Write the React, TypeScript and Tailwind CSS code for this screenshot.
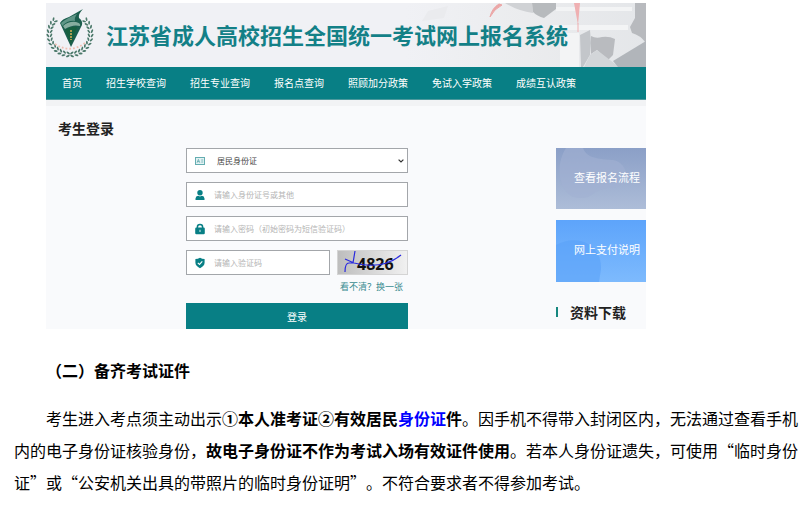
import React from 'react';

const NAV_ITEMS = ['首页', '招生学校查询', '招生专业查询', '报名点查询', '照顾加分政策', '免试入学政策', '成绩互认政策'];

const LEAF_ANGLES = Array.from({ length: 12 }, (_, i) => 48 + i * 11.5);

function Emblem() {
  return (
    <svg viewBox="0 0 48 48" className="relative -mt-1 size-12 shrink-0 overflow-visible" aria-hidden="true">
      {[1, -1].map((side) => (
        <g key={side} transform={side < 0 ? 'translate(48 0) scale(-1 1)' : undefined}>
          {LEAF_ANGLES.map((angle) => (
            <g key={angle} transform={`rotate(${angle} 24 25)`} fill="#4a7869">
              <ellipse cx="24" cy="2.8" rx="2" ry="0.9" transform="rotate(32 24 2.8)" />
              <ellipse cx="24" cy="6" rx="2" ry="0.9" transform="rotate(-32 24 6)" />
            </g>
          ))}
        </g>
      ))}
      <path d="M9 35 Q24 45 39 34" fill="none" stroke="#f0bdb0" strokeWidth="1.8" strokeDasharray="1.8 2" />
      <path d="M14 14 Q16 10 23 8 L37 0 Q32 5 33 9 Q37 12 36 16 L25 38 Z" fill="#1c5e4e" />
      <path d="M15 14 Q21 9 31 5 Q28 9 29 12 Q22 11 16 17 Z" fill="#5f9687" />
      <path d="M17 17 Q23 12 30 13 Q35 14 34 17 Q27 15 19 20 Z" fill="#86ad9f" />
      <path d="M19 21 Q25 17 31 18 L25 35 Z" fill="#17603f" />
      <path d="M25 21 V31" stroke="#a99b52" strokeWidth="2" strokeDasharray="2 1" />
    </svg>
  );
}

function GraduationBackdrop() {
  return (
    <svg viewBox="0 0 240 64" preserveAspectRatio="xMaxYMid slice" className="absolute inset-y-0 right-0 h-full w-60" aria-hidden="true">
      <defs>
        <linearGradient id="fade" x1="0" x2="1" y1="0" y2="0">
          <stop offset="0" stopColor="#f0f1f5" />
          <stop offset="0.5" stopColor="#ebecee" />
          <stop offset="1" stopColor="#e4e6e9" />
        </linearGradient>
      </defs>
      <rect width="240" height="64" fill="url(#fade)" />
      <path d="M22 8 L42 3 L38 15 L16 18 Z" fill="#eaebee" />
      <path d="M150 4 H226 V8 H150 Z M144 22 H222 V27 H144 Z M154 30 H173 V64 H154 Z" fill="#f3f4f5" />
      <path d="M99 0 H126 L127 10 Q112 8 99 0 Z" fill="#d0d2d5" />
      <path d="M126 0 H150 V6 L138 15 Q131 13 127 9 Z" fill="#b7babd" />
      <path d="M229 0 H240 V40 Q234 32 226 30 L224 24 L229 15 Z" fill="#b8babe" />
      <path d="M174 32 L184 27 L185 40 L184 52 L177 64 H175 Z" fill="#c3c6ca" />
      <path d="M185 33 Q190 36 196 34 Q203 33 209 36 L207 52 L202 57 L191 47 L185 51 Z" fill="#b9bbbf" />
      <path d="M191 47 L213 64 H178 L184 52 Z" fill="#d3d6d9" />
      <path d="M207 58 L240 38 V64 H212 Z" fill="#b1b5ba" />
      <path d="M96 2 Q88 6 84 14 Q86 5 93 1 Z" fill="#eba6a6" stroke="#eba6a6" />
      <path d="M168 0 H174 L172 22 Z" fill="#efb0b2" />
      <path d="M172 20 V29" stroke="#efb0b2" />
    </svg>
  );
}

function CardIcon() {
  return (
    <svg viewBox="0 0 10 8" className="h-2 w-2.5 shrink-0" aria-hidden="true">
      <rect x="0.5" y="0.5" width="9" height="7" fill="#e3f2f3" stroke="#64adb1" />
      <path d="M2 5.8 L3.4 2.4 L4.8 5.8 M2.6 4.6 H4.2 M6.2 3 H8.2 M6.2 5 H8.2" fill="none" stroke="#4fa0a5" strokeWidth="0.7" />
    </svg>
  );
}

function UserIcon() {
  return (
    <svg viewBox="0 0 10 10" className="size-2.5 shrink-0" fill="#087f85" aria-hidden="true">
      <circle cx="5" cy="2.8" r="2.7" />
      <path d="M0.5 10 V8.4 Q0.7 6.2 3.2 5.8 L5 6.6 L6.8 5.8 Q9.3 6.2 9.5 8.4 V10 Z" />
    </svg>
  );
}

function LockIcon() {
  return (
    <svg viewBox="0 0 10 11" className="h-3 w-2.5 shrink-0" aria-hidden="true">
      <path d="M2.4 5 V3.4 Q2.4 1 5 1 Q7.6 1 7.6 3.4 V5" fill="none" stroke="#087f85" strokeWidth="1.5" />
      <rect x="0.2" y="4" width="9.6" height="6.8" rx="1.2" fill="#087f85" />
      <path d="M5 6.3 V8.4" stroke="#b9dcde" strokeWidth="1.2" />
    </svg>
  );
}

function ShieldIcon() {
  return (
    <svg viewBox="0 0 10 11" className="h-3 w-2.5 shrink-0" aria-hidden="true">
      <path d="M5 0.3 Q7 1.6 9.6 1.6 V5.3 Q9.4 8.8 5 10.7 Q0.6 8.8 0.4 5.3 V1.6 Q3 1.6 5 0.3 Z" fill="#087f85" />
      <path d="M2.8 5.3 L4.5 6.9 L7.3 3.9" fill="none" stroke="#fff" strokeWidth="1.1" />
    </svg>
  );
}

function Captcha() {
  return (
    <svg viewBox="0 0 71 25" className="h-[25px] w-[71px]" role="img" aria-label="验证码">
      <defs>
        <linearGradient id="captcha" x1="0" x2="1" y1="0" y2="0">
          <stop offset="0" stopColor="#bdbdbd" />
          <stop offset="1" stopColor="#f1f1f1" />
        </linearGradient>
      </defs>
      <rect x="0.5" y="0.5" width="70" height="24" fill="url(#captcha)" stroke="#d4d4d4" />
      <text x="20" y="20" fontSize="16" fontWeight="700" fontFamily="'Open Sans', sans-serif" fill="#111">
        4826
      </text>
      <path d="M8 9 L17 13 Q46 20 64 5 M18 1 L16 13 H12 Q8 13 8 22" fill="none" stroke="#2929df" strokeWidth="1.2" />
    </svg>
  );
}

interface FieldProps {
  icon: React.ReactNode;
  label: string;
  type?: string;
}

function Field({ icon, label, type = 'text' }: FieldProps) {
  return (
    <label className="flex h-[25px] min-w-0 flex-1 items-center gap-[9px] border border-[#a3a6aa] bg-white pl-2">
      {icon}
      <input
        type={type}
        placeholder={label}
        aria-label={label}
        className="w-full min-w-0 bg-transparent text-[8px] text-[#555] outline-none placeholder:text-[#b4b4b4]"
      />
    </label>
  );
}

function LoginForm() {
  return (
    <form className="flex w-[222px] flex-col gap-[9px]" onSubmit={(e) => e.preventDefault()}>
      <label className="relative flex h-[25px] items-center gap-3 border border-[#a3a6aa] bg-white pl-2">
        <CardIcon />
        <select aria-label="证件类型" className="w-full appearance-none bg-transparent text-[8px] text-[#444] outline-none">
          <option>居民身份证</option>
        </select>
        <svg viewBox="0 0 6 4" className="pointer-events-none absolute right-[3px] h-1 w-1.5" aria-hidden="true">
          <path d="M0.6 0.6 L3 3 L5.4 0.6" fill="none" stroke="#333" strokeWidth="1.2" />
        </svg>
      </label>
      <div className="flex">
        <Field icon={<UserIcon />} label="请输入身份证号或其他" />
      </div>
      <div className="flex">
        <Field icon={<LockIcon />} label="请输入密码（初始密码为短信验证码）" type="password" />
      </div>
      <div className="flex gap-[7px]">
        <Field icon={<ShieldIcon />} label="请输入验证码" />
        <Captcha />
      </div>
      <a href="#captcha" className="-mt-[5px] self-end pr-[5px] text-[9px] leading-4 text-[#3a8c91]">
        看不清？换一张
      </a>
      <button type="submit" className="-mt-px h-[26px] bg-[#087f85] text-[10px] text-white">
        登录
      </button>
    </form>
  );
}

function Sidebar() {
  return (
    <aside className="w-[90px] overflow-hidden whitespace-nowrap">
      <a href="#process" className="relative flex h-[61px] items-center overflow-hidden bg-linear-to-b from-[#8b9fc7] to-[#adbdd8] pb-[3px] pl-[18px] text-[11px] text-white">
        <svg viewBox="0 0 90 61" className="absolute inset-0 size-full" aria-hidden="true">
          <path d="M10 0 C-2 18 3 49 23 50 C39 51 38 39 56 40 C77 38 72 14 57 12 C37 11 30 8 27 0 Z" fill="#a1b1d2" opacity="0.6" />
        </svg>
        <span className="relative">查看报名流程</span>
      </a>
      <a href="#payment" className="relative mt-[11px] flex h-[62px] items-center overflow-hidden bg-linear-to-b from-[#5da4fb] to-[#7dbafd] pb-[3px] pl-[18px] text-[11px] text-white">
        <svg viewBox="0 0 90 62" className="absolute inset-0 size-full" aria-hidden="true">
          <path d="M0 25 C21 13 46 24 45 49 L43 62 H0 Z" fill="#5aa1f9" opacity="0.6" />
        </svg>
        <span className="relative">网上支付说明</span>
      </a>
      <h2 className="mt-5 flex items-center gap-3 text-[14px] leading-5 font-bold text-[#222]">
        <span className="h-2.5 w-0.5 bg-[#16877f]" />
        资料下载
      </h2>
    </aside>
  );
}

function RegistrationPortal() {
  return (
    <section className="max-w-[600px] overflow-hidden bg-[#f9fafc]">
      <header className="relative flex h-16 items-center gap-3 bg-[#f0f1f5]">
        <GraduationBackdrop />
        <Emblem />
        <h1 className="relative pb-px text-[22px] font-bold whitespace-nowrap text-[#138087]">
          江苏省成人高校招生全国统一考试网上报名系统
        </h1>
      </header>
      <nav className="flex h-[33px] items-center gap-6 border-b border-[#4d999d] bg-[#087f85] pb-px pl-4 text-[10px] whitespace-nowrap text-white">
        {NAV_ITEMS.map((item) => (
          <a key={item} href="#nav">
            {item}
          </a>
        ))}
      </nav>
      <div className="h-1.5 bg-[#f2f3f5]" />
      <h2 className="mt-3 pl-3 text-[14px] leading-5 font-bold text-[#222]">考生登录</h2>
      <div className="mt-[10px] flex items-start justify-between pl-[140px]">
        <LoginForm />
        <Sidebar />
      </div>
    </section>
  );
}

export default function App() {
  return (
    <main
      lang="zh-CN"
      className="min-h-screen bg-white pt-[3px] pr-2.5 pl-3.5 font-['Noto_Sans_CJK_SC',sans-serif] text-base leading-8 text-black [text-spacing-trim:space-all]"
    >
      <div className="pl-8 leading-normal">
        <RegistrationPortal />
      </div>
      <h2 className="mt-[25px] indent-8 font-bold">（二）备齐考试证件</h2>
      <p className="mt-4 indent-8">
        考生进入考点须主动出示
        <strong>
          ①本人准考证②有效居民
          <a href="#id-card" className="text-[#0000ff]">
            身份证
          </a>
          件
        </strong>
        。因手机不得带入封闭区内，无法通过查看手机内的电子身份证核验身份，
        <strong>故电子身份证不作为考试入场有效证件使用</strong>
        。若本人身份证遗失，可使用“临时身份证”或“公安机关出具的带照片的临时身份证明”。不符合要求者不得参加考试。
      </p>
    </main>
  );
}
